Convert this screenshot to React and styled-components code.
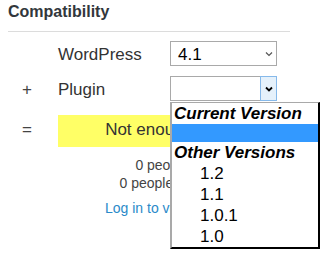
import styled, { createGlobalStyle } from "styled-components";

const GlobalStyle = createGlobalStyle`
  html, body {
    margin: 0;
    background: #fff;
    font-family: "Liberation Sans", Arial, sans-serif;
  }
`;

const versions = ["1.2", "1.1", "1.0.1", "1.0"];

const Chevron = ({ color, weight }) => (
  <svg width="8" height="6" viewBox="0 0 8 6">
    <polyline
      points="1,1.5 4,4.5 7,1.5"
      fill="none"
      stroke={color}
      strokeWidth={weight}
    />
  </svg>
);

export default function App() {
  return (
    <>
      <GlobalStyle />
      <Panel>
        <Title>Compatibility</Title>

        <Row $gap={9} $height={25}>
          <Operator />
          <Label>WordPress</Label>
          <Select>
            <SelectValue>4.1</SelectValue>
            <Arrow>
              <Chevron color="#555" weight={1.2} />
            </Arrow>
          </Select>
        </Row>

        <Row $gap={10} $height={25} $top>
          <Operator>+</Operator>
          <Label>Plugin</Label>
          <Select>
            <SelectValue />
            <Arrow $active>
              <Chevron color="#000" weight={1.8} />
            </Arrow>
            <Dropdown>
              <Group>Current Version</Group>
              <Option $selected />
              <Group>Other Versions</Group>
              {versions.map((v) => (
                <Option key={v}>{v}</Option>
              ))}
            </Dropdown>
          </Select>
        </Row>

        <Row $gap={14} $height={32}>
          <Operator $lift>=</Operator>
          <Verdict>Not enough data</Verdict>
        </Row>

        <Votes>
          <VoteLine>0 people say it works.</VoteLine>
          <VoteLine>0 people say it's broken.</VoteLine>
        </Votes>
        <Login>
          <a href="#login">Log in to vote.</a>
        </Login>
      </Panel>
    </>
  );
}

const Panel = styled.div`
  width: 282px;
  min-height: 253px;
  padding: 0 8px;
`;

const Title = styled.h3`
  margin: 0;
  padding: 2px 0 9px;
  font-size: 16px;
  line-height: 20px;
  font-weight: bold;
  color: #32373c;
  border-bottom: 1px solid #dcdcdc;
`;

const Row = styled.div`
  position: relative;
  z-index: ${(p) => (p.$top ? 5 : "auto")};
  display: grid;
  grid-template-columns: 50px 112px 108px;
  height: ${(p) => p.$height}px;
  margin-top: ${(p) => p.$gap}px;
  align-items: center;
`;

const Operator = styled.div`
  padding: ${(p) => (p.$lift ? "0 0 3px" : "3px 0 0")} 14px;
  font-size: 17px;
  color: #444;
`;

const Label = styled.div`
  padding-top: 3px;
  font-size: 17px;
  color: #333;
`;

const Select = styled.div`
  position: relative;
  box-sizing: border-box;
  width: 107px;
  height: 25px;
  border: 1px solid #a9a9a9;
  display: flex;
  align-items: stretch;
  background: #fff;
`;

const SelectValue = styled.div`
  flex: 1;
  padding: 3px 0 0 7px;
  font-size: 17px;
  line-height: 20px;
  color: #000;
`;

const Arrow = styled.div`
  box-sizing: border-box;
  width: 17px;
  display: flex;
  align-items: center;
  justify-content: center;
  background: ${(p) => (p.$active ? "#e5f1fb" : "transparent")};
  border: 1px solid ${(p) => (p.$active ? "#86b9ea" : "transparent")};
  margin: -1px -1px -1px 0;
`;

const Dropdown = styled.div`
  position: absolute;
  left: -1px;
  top: 25px;
  z-index: 5;
  width: 150px;
  box-sizing: border-box;
  background: #fff;
  border-left: 2px solid #a9a9a9;
  border-top: 1px solid #a9a9a9;
  border-right: 2px solid #000;
  border-bottom: 2px solid #000;
  font-size: 17px;
  color: #000;
`;

const Group = styled.div`
  height: 21px;
  line-height: 21px;
  padding-left: 2px;
  font-weight: bold;
  font-style: italic;
  white-space: nowrap;
`;

const Option = styled.div`
  height: ${(p) => (p.$selected ? 18 : 21)}px;
  line-height: 21px;
  padding-left: 28px;
  background: ${(p) => (p.$selected ? "#3399ff" : "transparent")};
`;

const Verdict = styled.div`
  grid-column: 2 / 4;
  align-self: stretch;
  display: flex;
  align-items: center;
  justify-content: center;
  padding-bottom: 3px;
  background: #ffff66;
  font-size: 17px;
  color: #333;
  white-space: nowrap;
  overflow: hidden;
`;

const Votes = styled.div`
  margin: 9px 0 0 50px;
  width: 220px;
  box-sizing: border-box;
  padding-right: 8px;
  text-align: right;
  font-size: 14px;
  line-height: 18px;
  color: #444;
`;

const VoteLine = styled.div``;

const Login = styled.p`
  margin: 7px 0 0 97px;
  font-size: 14px;
  line-height: 18px;

  a {
    color: #2a8ac9;
    text-decoration: none;
  }
`;
